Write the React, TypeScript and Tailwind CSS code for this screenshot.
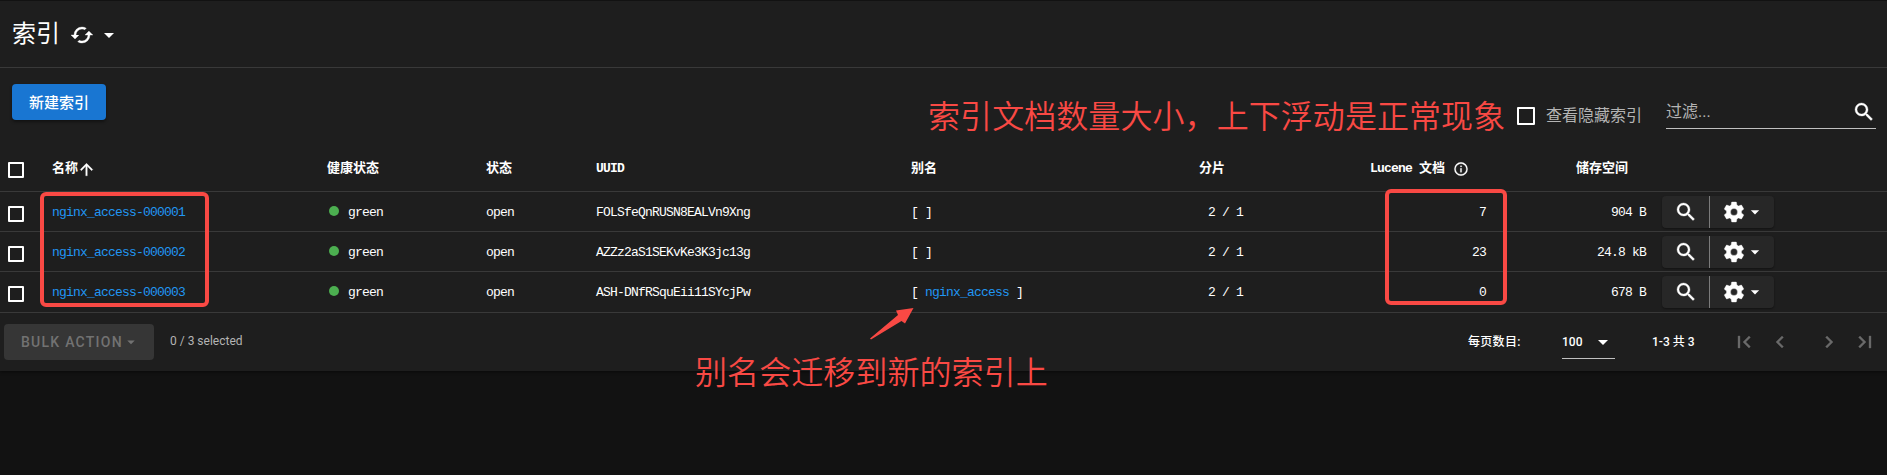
import React from "react";
import { MdArrowDropDown } from "react-icons/md";

const SEARCH =
  "M9.5,3A6.5,6.5 0 0,1 16,9.5C16,11.11 15.41,12.59 14.44,13.73L14.71,14H15.5L20.5,19L19,20.5L14,15.5V14.71L13.73,14.44C12.59,15.41 11.11,16 9.5,16A6.5,6.5 0 0,1 3,9.5A6.5,6.5 0 0,1 9.5,3M9.5,5C7,5 5,7 5,9.5C5,12 7,14 9.5,14C12,14 14,12 14,9.5C14,7 12,5 9.5,5Z";
const COG =
  "M12,15.5A3.5,3.5 0 0,1 8.5,12A3.5,3.5 0 0,1 12,8.5A3.5,3.5 0 0,1 15.5,12A3.5,3.5 0 0,1 12,15.5M19.43,12.97C19.47,12.65 19.5,12.33 19.5,12C19.5,11.67 19.47,11.34 19.43,11L21.54,9.37C21.73,9.22 21.78,8.95 21.66,8.73L19.66,5.27C19.54,5.05 19.27,4.96 19.05,5.05L16.56,6.05C16.04,5.66 15.5,5.32 14.87,5.07L14.5,2.42C14.46,2.18 14.25,2 14,2H10C9.75,2 9.54,2.18 9.5,2.42L9.13,5.07C8.5,5.32 7.96,5.66 7.44,6.05L4.95,5.05C4.73,4.96 4.46,5.05 4.34,5.27L2.34,8.73C2.21,8.95 2.27,9.22 2.46,9.37L4.57,11C4.53,11.34 4.5,11.67 4.5,12C4.5,12.33 4.53,12.65 4.57,12.97L2.46,14.63C2.27,14.78 2.21,15.05 2.34,15.27L4.34,18.73C4.46,18.95 4.73,19.03 4.95,18.95L7.44,17.94C7.96,18.34 8.5,18.68 9.13,18.93L9.5,21.58C9.54,21.82 9.75,22 10,22H14C14.25,22 14.46,21.82 14.5,21.58L14.87,18.93C15.5,18.67 16.04,18.34 16.56,17.94L19.05,18.95C19.27,19.03 19.54,18.95 19.66,18.73L21.66,15.27C21.78,15.05 21.73,14.78 21.54,14.63L19.43,12.97Z";
const CACHED =
  "M19,8L15,12H18A6,6 0 0,1 12,18C11,18 10.03,17.75 9.2,17.3L7.74,18.76C8.97,19.54 10.43,20 12,20A8,8 0 0,0 20,12H23M6,12A6,6 0 0,1 12,6C13,6 13.97,6.25 14.8,6.7L16.26,5.24C15.03,4.46 13.57,4 12,4A8,8 0 0,0 4,12H1L5,16L9,12";
const ARROW_UP = "M13,20H11V8L5.5,13.5L4.08,12.08L12,4.16L19.92,12.08L18.5,13.5L13,8V20Z";
const INFO =
  "M11,9H13V7H11M12,20C7.59,20 4,16.41 4,12C4,7.59 7.59,4 12,4C16.41,4 20,7.59 20,12C20,16.41 16.41,20 12,20M12,2A10,10 0 0,0 2,12A10,10 0 0,0 12,22A10,10 0 0,0 22,12A10,10 0 0,0 12,2M11,17H13V11H11V17Z";
const FIRST = "M18.41,16.59L13.82,12L18.41,7.41L17,6L11,12L17,18L18.41,16.59M6,6H8V18H6V6Z";
const PREV = "M15.41,16.58L10.83,12L15.41,7.41L14,6L8,12L14,18L15.41,16.58Z";
const NEXT = "M8.59,16.58L13.17,12L8.59,7.41L10,6L16,12L10,18L8.59,16.58Z";
const LAST = "M5.59,7.41L10.18,12L5.59,16.59L7,18L13,12L7,6L5.59,7.41M16,6H18V18H16V6Z";

function Icon({ d, className }: { d: string; className: string }) {
  return (
    <svg
      viewBox="0 0 24 24"
      fill="currentColor"
      stroke="currentColor"
      strokeWidth={0.35}
      className={"block shrink-0 " + className}
    >
      <path d={d} />
    </svg>
  );
}

function Box({ className }: { className: string }) {
  return <span className={"block shrink-0 rounded-[1px] border-2 border-white " + className} />;
}

const COLS =
  "grid grid-cols-[52px_274px_160px_110px_315px_288px_152px_135px_160px_241px] border-b border-[#393939]";

const rows = [
  { name: "nginx_access-000001", uuid: "FOLSfeQnRUSN8EALVn9Xng", alias: "", docs: "7", size: "904 B" },
  { name: "nginx_access-000002", uuid: "AZZz2aS1SEKvKe3K3jc13g", alias: "", docs: "23", size: "24.8 kB" },
  { name: "nginx_access-000003", uuid: "ASH-DNfRSquEii11SYcjPw", alias: "nginx_access", docs: "0", size: "678 B" },
];

export default function App() {
  return (
    <div className="relative h-[475px] w-[1887px] overflow-hidden bg-[#121212] font-['Roboto','Noto_Sans_CJK_SC',sans-serif] text-white">
      <div className="h-[371px] border-t border-[#121212] bg-[#1e1e1e] shadow-[0_1px_3px_rgba(0,0,0,0.5)]">
        <header className="flex h-[67px] items-center border-b border-[#393939] pl-3">
          <h1 className="text-[24px] leading-8">索引</h1>
          <Icon d={CACHED} className="ml-[10px] mt-px size-6" />
          <MdArrowDropDown className="ml-[3px] mt-[2px] size-6" />
        </header>

        <div className="flex h-[80px] items-start">
          <button className="ml-3 mt-4 h-9 w-[94px] rounded bg-[#1976d2] pt-[2px] text-[15px] font-medium shadow-[0_2px_3px_rgba(0,0,0,0.4)]">
            新建索引
          </button>
          <div className="ml-[1411px] mt-[39px] flex items-center">
            <Box className="size-[18px]" />
          </div>
          <span className="ml-[11px] mt-[36px] w-[97px] whitespace-nowrap text-[16px] leading-6 text-[#b4b4b4]">查看隐藏索引</span>
          <div className="ml-[23px] mt-[27px] flex h-[34px] w-[210px] justify-between border-b border-[#c0c0c0] text-[#b4b4b4]">
            <span className="text-[16px] leading-[34px]">过滤...</span>
            <Icon d={SEARCH} className="mt-[5px] size-6 text-white" />
          </div>
        </div>

        <div className="font-['Liberation_Mono','Noto_Sans_CJK_SC',monospace] text-[13px] leading-[18px]">
          <div className={COLS + " h-[44px] pt-3 font-bold"}>
            <Box className="ml-2 mt-[2px] size-4" />
            <span className="flex">
              名称
              <Icon d={ARROW_UP} className="-ml-px mt-0 size-[19px]" />
            </span>
            <span className="pl-px">健康状态</span>
            <span>状态</span>
            <span className="tracking-[-0.8px]">UUID</span>
            <span>别名</span>
            <span>分片</span>
            <span className="ml-[19px] flex whitespace-pre">
              <span className="tracking-[-0.8px]">Lucene </span>文档
              <Icon d={INFO} className="ml-[8px] mt-px size-4" />
            </span>
            <span className="pr-[18px] text-right">储存空间</span>
            <span />
          </div>
          {rows.map((r, i) => (
            <div
              key={r.name}
              className={COLS + (i === 2 ? " h-[41px]" : " h-10") + " pt-3 tracking-[-0.8px] whitespace-pre"}
            >
              <Box className="ml-2 mt-[2px] size-4" />
              <a className="text-[#2196f3]">{r.name}</a>
              <span className="flex">
                <span className="ml-[3px] mr-[9px] mt-[2px] size-[10px] rounded-full bg-[#4caf50]" />
                green
              </span>
              <span>open</span>
              <span>{r.uuid}</span>
              <span>
                {r.alias ? (
                  <>
                    [ <a className="text-[#2196f3]">{r.alias}</a> ]
                  </>
                ) : (
                  "[ ]"
                )}
              </span>
              <span className="pl-[9px]">2 / 1</span>
              <span className="text-right">{r.docs}</span>
              <span className="text-right">{r.size}</span>
              <span className="-mt-2 ml-4 flex h-8 w-[112px] rounded bg-[#272727] shadow-[0_1px_2px_rgba(0,0,0,0.4)]">
                <span className="flex w-12 items-center justify-center border-r border-[#7b7b7b]">
                  <Icon d={SEARCH} className="size-6" />
                </span>
                <span className="flex items-center pl-3">
                  <Icon d={COG} className="size-6" />
                  <MdArrowDropDown className="-ml-px size-5" />
                </span>
              </span>
            </div>
          ))}
        </div>

        <footer className="flex h-[58px] items-start text-[12px]">
          <div className="ml-1 mt-[11px] flex h-9 w-[150px] items-center rounded bg-[#363636] pl-[17px] text-[14px] font-medium tracking-[1.25px] text-[#727272]">
            BULK ACTION
            <MdArrowDropDown className="-ml-px size-[18px]" />
          </div>
          <span className="ml-4 mt-[19px] w-[100px] leading-[18px] text-[#b4b4b4]">0 / 3 selected</span>
          <span className="ml-[1197px] mt-[20px] w-[94px] pl-px font-medium leading-[18px] tracking-[0.3px]">每页数目:</span>
          <div className="ml-px mt-[13px] flex h-[33px] w-[53px] items-center justify-between border-b border-[#c0c0c0] font-medium">
            100
            <MdArrowDropDown className="size-6" />
          </div>
          <span className="ml-[37px] mt-[20px] w-[76px] font-medium leading-[18px]">1-3 共 3</span>
          <div className="ml-[4px] mt-[17px] flex text-[#6a6a6a]">
            <Icon d={FIRST} className="size-6" />
            <Icon d={PREV} className="ml-3 size-6" />
            <Icon d={NEXT} className="ml-[25px] size-6" />
            <Icon d={LAST} className="ml-3 size-6" />
          </div>
        </footer>
      </div>

      <div className="absolute left-[40px] top-[192px] h-[115px] w-[169px] rounded-md border-4 border-[#f94944]" />
      <div className="absolute left-[1385px] top-[189px] h-[116px] w-[122px] rounded-md border-4 border-[#f94944]" />
      <p className="absolute left-[928px] top-[96px] whitespace-nowrap text-[32px] leading-[42px] tracking-[0.07px] text-[#f94944] font-[350]">
        索引文档数量大小，上下浮动是正常现象
      </p>
      <p className="absolute left-[695px] top-[352px] whitespace-nowrap text-[32px] leading-[42px] tracking-[0.07px] text-[#f94944] font-[350]">
        别名会迁移到新的索引上
      </p>
      <svg className="absolute left-[868px] top-[306px] h-[36px] w-[48px]" viewBox="0 0 48 36" fill="#f94944">
        <path d="M45.500 2L28 4.500L30 9L2 32.500L3 33.500L33.500 15L37 17.500Z" />
      </svg>
    </div>
  );
}
